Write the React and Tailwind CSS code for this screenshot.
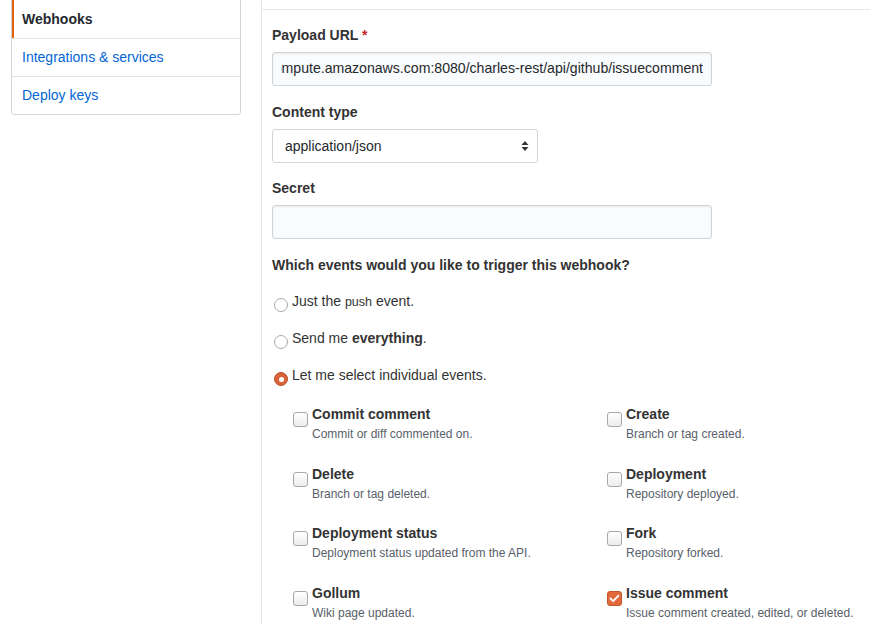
import React from 'react';

const events = [
  ['Commit comment', 'Commit or diff commented on.', false],
  ['Create', 'Branch or tag created.', false],
  ['Delete', 'Branch or tag deleted.', false],
  ['Deployment', 'Repository deployed.', false],
  ['Deployment status', 'Deployment status updated from the API.', false],
  ['Fork', 'Repository forked.', false],
  ['Gollum', 'Wiki page updated.', false],
  ['Issue comment', 'Issue comment created, edited, or deleted.', true],
];

const Radio = ({ checked }) =>
  checked ? (
    <span className="mt-[7px] w-[14px] h-[14px] rounded-full bg-[#d9643a] border border-[#b8502b] flex items-center justify-center shrink-0">
      <span className="w-[5px] h-[5px] rounded-full bg-white" />
    </span>
  ) : (
    <span className="mt-[7px] w-[14px] h-[14px] rounded-full border border-[#a9a9a9] bg-white shrink-0" />
  );

const Checkbox = ({ checked }) =>
  checked ? (
    <span className="mt-[8px] w-[15px] h-[15px] rounded-[3px] bg-[#e2693c] border border-[#c2542b] flex items-center justify-center shrink-0">
      <svg width="11" height="9" viewBox="0 0 11 9">
        <path d="M1.5 4.5 L4.2 7.2 L9.5 1.6" fill="none" stroke="white" strokeWidth="1.8" strokeLinecap="round" strokeLinejoin="round" />
      </svg>
    </span>
  ) : (
    <span className="mt-[8px] w-[15px] h-[15px] rounded-[3px] border border-[#a8a8a8] bg-gradient-to-b from-white to-[#ececec] shrink-0" />
  );

export default function App() {
  return (
    <div className="flex min-h-screen bg-white text-[14px] text-[#333] font-['Liberation_Sans',Arial,sans-serif]">
      {/* Sidebar */}
      <div className="w-[261px] shrink-0 pl-[11px]">
        <div className="-mt-px w-[230px] border border-[#d1d5da] rounded-b-[3px]">
          <div className="h-[39px] border-b border-[#e1e4e8] pl-[10px] flex items-center font-bold text-[#24292e] shadow-[inset_2px_0_0_#e36209]">
            Webhooks
          </div>
          <div className="h-[38px] border-b border-[#e1e4e8] pl-[10px] flex items-center text-[#0366d6]">
            Integrations &amp; services
          </div>
          <div className="h-[37px] pl-[10px] flex items-center text-[#0366d6]">Deploy keys</div>
        </div>
      </div>

      {/* Main */}
      <div className="flex-1 border-l border-[#e1e4e8]">
        <div className="h-[10px] border-b border-[#e1e4e8]" />
        <div className="pl-[10px] pt-[15px]">
          <div className="font-bold mb-[7px] leading-5">
            Payload URL <span className="text-[#cb2431]">*</span>
          </div>
          <div className="w-[440px] h-[34px] border border-[#d1d5da] rounded-[3px] bg-[#fafbfc] px-[8px] shadow-[inset_0_1px_2px_rgba(27,31,35,0.075)]">
            <div className="h-full overflow-hidden flex justify-end items-center whitespace-nowrap text-[14.1px] text-[#24292e]">
              ec2-52-27-101-44.us-west-2.compute.amazonaws.com:8080/charles-rest/api/github/issuecomment
            </div>
          </div>

          <div className="font-bold mt-[16px] mb-[7px] leading-5">Content type</div>
          <div className="w-[266px] h-[34px] border border-[#d1d5da] rounded-[3px] bg-white pl-[12px] pr-[8px] flex items-center justify-between text-[#24292e]">
            <span>application/json</span>
            <svg width="8" height="12" viewBox="0 0 8 12">
              <path d="M4 1 L7.5 5 L0.5 5 Z M4 11 L7.5 7 L0.5 7 Z" fill="#333" />
            </svg>
          </div>

          <div className="font-bold mt-[15px] mb-[7px] leading-5">Secret</div>
          <div className="w-[440px] h-[34px] border border-[#d1d5da] rounded-[3px] bg-[#fafbfc] shadow-[inset_0_1px_2px_rgba(27,31,35,0.075)]" />

          <div className="font-bold mt-[16px] leading-5">Which events would you like to trigger this webhook?</div>

          <div className="mt-[16px] flex flex-col gap-[16px]">
            <label className="flex items-start gap-[4px] ml-[2px] leading-5">
              <Radio />
              <span>
                Just the <span className="text-[12.5px]">push</span> event.
              </span>
            </label>
            <label className="flex items-start gap-[4px] ml-[2px] leading-5">
              <Radio />
              <span>
                Send me <b>everything</b>.
              </span>
            </label>
            <label className="flex items-start gap-[4px] ml-[2px] leading-5">
              <Radio checked />
              <span>Let me select individual events.</span>
            </label>
          </div>

          <div className="mt-[18px] ml-[21px] grid grid-cols-[314px_1fr] gap-y-[20.7px]">
            {events.map(([title, desc, checked]) => (
              <label key={title} className="flex items-start gap-[4px]">
                <Checkbox checked={checked} />
                <span>
                  <span className="block font-bold leading-5">{title}</span>
                  <span className="block mt-[2px] text-[12px] leading-[17px] text-[#586069]">{desc}</span>
                </span>
              </label>
            ))}
          </div>
        </div>
      </div>
    </div>
  );
}
